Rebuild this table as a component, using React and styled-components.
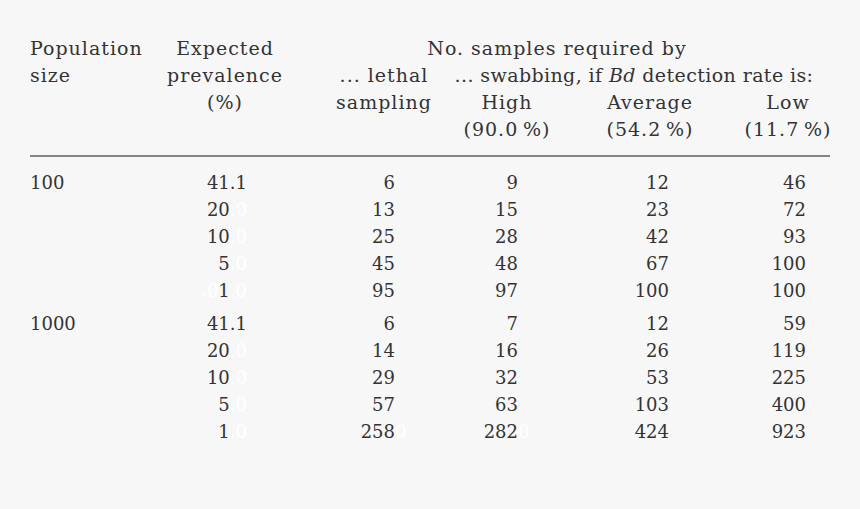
import React from 'react';
import styled, { createGlobalStyle, css } from 'styled-components';

const GlobalStyle = createGlobalStyle`
  html, body {
    margin: 0;
    padding: 0;
    background: #f7f7f7;
  }
`;

const Page = styled.div`
  width: 860px;
  height: 509px;
  background: #f7f7f7;
  color: #333;
  font-family: "DejaVu Serif", "Liberation Serif", serif;
  font-size: 18px;
  padding: 35px 0 0 30px;
  box-sizing: border-box;
  overflow: hidden;
`;

const COLS = '98px 194px 124px 122px 164px 112px';

const HeadGrid = styled.div`
  display: grid;
  grid-template-columns: ${COLS};
  grid-auto-rows: 27px;
  line-height: 27px;
  font-size: 19px;
  letter-spacing: 1px;
  white-space: nowrap;
`;

const HeadCell = styled.div`
  grid-column: ${(p) => p.col} / span ${(p) => p.span || 1};
  grid-row: ${(p) => p.row};
  text-align: ${(p) => p.align || 'center'};
  ${(p) =>
    p.pr &&
    css`
      padding-right: ${p.pr}px;
    `}
  ${(p) =>
    p.ls !== undefined &&
    css`
      letter-spacing: ${p.ls}px;
    `}
`;

const Rule = styled.div`
  width: 800px;
  height: 2px;
  background: #858585;
  margin: 12px 0 12px;
`;

const Group = styled.div`
  display: grid;
  grid-template-columns: ${COLS};
  grid-auto-rows: 27px;
  line-height: 27px;
  white-space: nowrap;
  ${(props) =>
    props.gap &&
    css`
      margin-top: ${props.gap}px;
    `}
`;

const Size = styled.div`
  grid-column: 1;
  text-align: left;
`;

const Num = styled.div`
  grid-column: ${(p) => p.col};
  text-align: right;
  padding-right: ${(p) => p.pr}px;
`;

// invisible alignment chars left over from the source table
const Ghost = styled.span`
  color: #fff;
  ${(p) =>
    p.hang &&
    css`
      margin-right: -1ch;
    `}
`;

const PAD = [0, 0, 75, 51, 50, 63, 38];

const groups = [
  {
    size: '100',
    rows: [
      [<>41.1</>, '6', '9', '12', '46'],
      [<>20<Ghost>.0</Ghost></>, '13', '15', '23', '72'],
      [<>10<Ghost>.0</Ghost></>, '25', '28', '42', '93'],
      [<>5<Ghost>.0</Ghost></>, '45', '48', '67', '100'],
      [<><Ghost>.0</Ghost>1<Ghost>.0</Ghost></>, '95', '97', '100', '100'],
    ],
  },
  {
    size: '1000',
    rows: [
      [<>41.1</>, '6', '7', '12', '59'],
      [<>20<Ghost>.0</Ghost></>, '14', '16', '26', '119'],
      [<>10<Ghost>.0</Ghost></>, '29', '32', '53', '225'],
      [<>5<Ghost>.0</Ghost></>, '57', '63', '103', '400'],
      [<>1<Ghost>.0</Ghost></>, <>258<Ghost hang>0</Ghost></>, <>282<Ghost hang>0</Ghost></>, '424', '923'],
    ],
  },
];

const App = () => {
  return (
    <Page>
      <GlobalStyle />
      <HeadGrid>
        <HeadCell row={1} col={1} align="left">Population</HeadCell>
        <HeadCell row={1} col={2}>Expected</HeadCell>
        <HeadCell row={1} col={3} span={4} pr={52}>No. samples required by</HeadCell>

        <HeadCell row={2} col={1} align="left">size</HeadCell>
        <HeadCell row={2} col={2}>prevalence</HeadCell>
        <HeadCell row={2} col={3}>... lethal</HeadCell>
        <HeadCell row={2} col={4} span={3} pr={22} ls={0.4}>
          ... swabbing, if <i>Bd</i> detection rate is:
        </HeadCell>

        <HeadCell row={3} col={2}>(%)</HeadCell>
        <HeadCell row={3} col={3}>sampling</HeadCell>
        <HeadCell row={3} col={4}>High</HeadCell>
        <HeadCell row={3} col={5}>Average</HeadCell>
        <HeadCell row={3} col={6}>Low</HeadCell>

        <HeadCell row={4} col={4}>(90.0{'\u2009'}%)</HeadCell>
        <HeadCell row={4} col={5}>(54.2{'\u2009'}%)</HeadCell>
        <HeadCell row={4} col={6}>(11.7{'\u2009'}%)</HeadCell>
      </HeadGrid>
      <Rule />
      {groups.map((g, gi) => (
        <Group key={g.size} gap={gi > 0 ? 6 : 0}>
          {g.rows.map((row, ri) => (
            <React.Fragment key={ri}>
              <Size>{ri === 0 ? g.size : ''}</Size>
              {row.map((v, ci) => (
                <Num key={ci} col={ci + 2} pr={PAD[ci + 2]}>
                  {v}
                </Num>
              ))}
            </React.Fragment>
          ))}
        </Group>
      ))}
    </Page>
  );
};

export default App;
